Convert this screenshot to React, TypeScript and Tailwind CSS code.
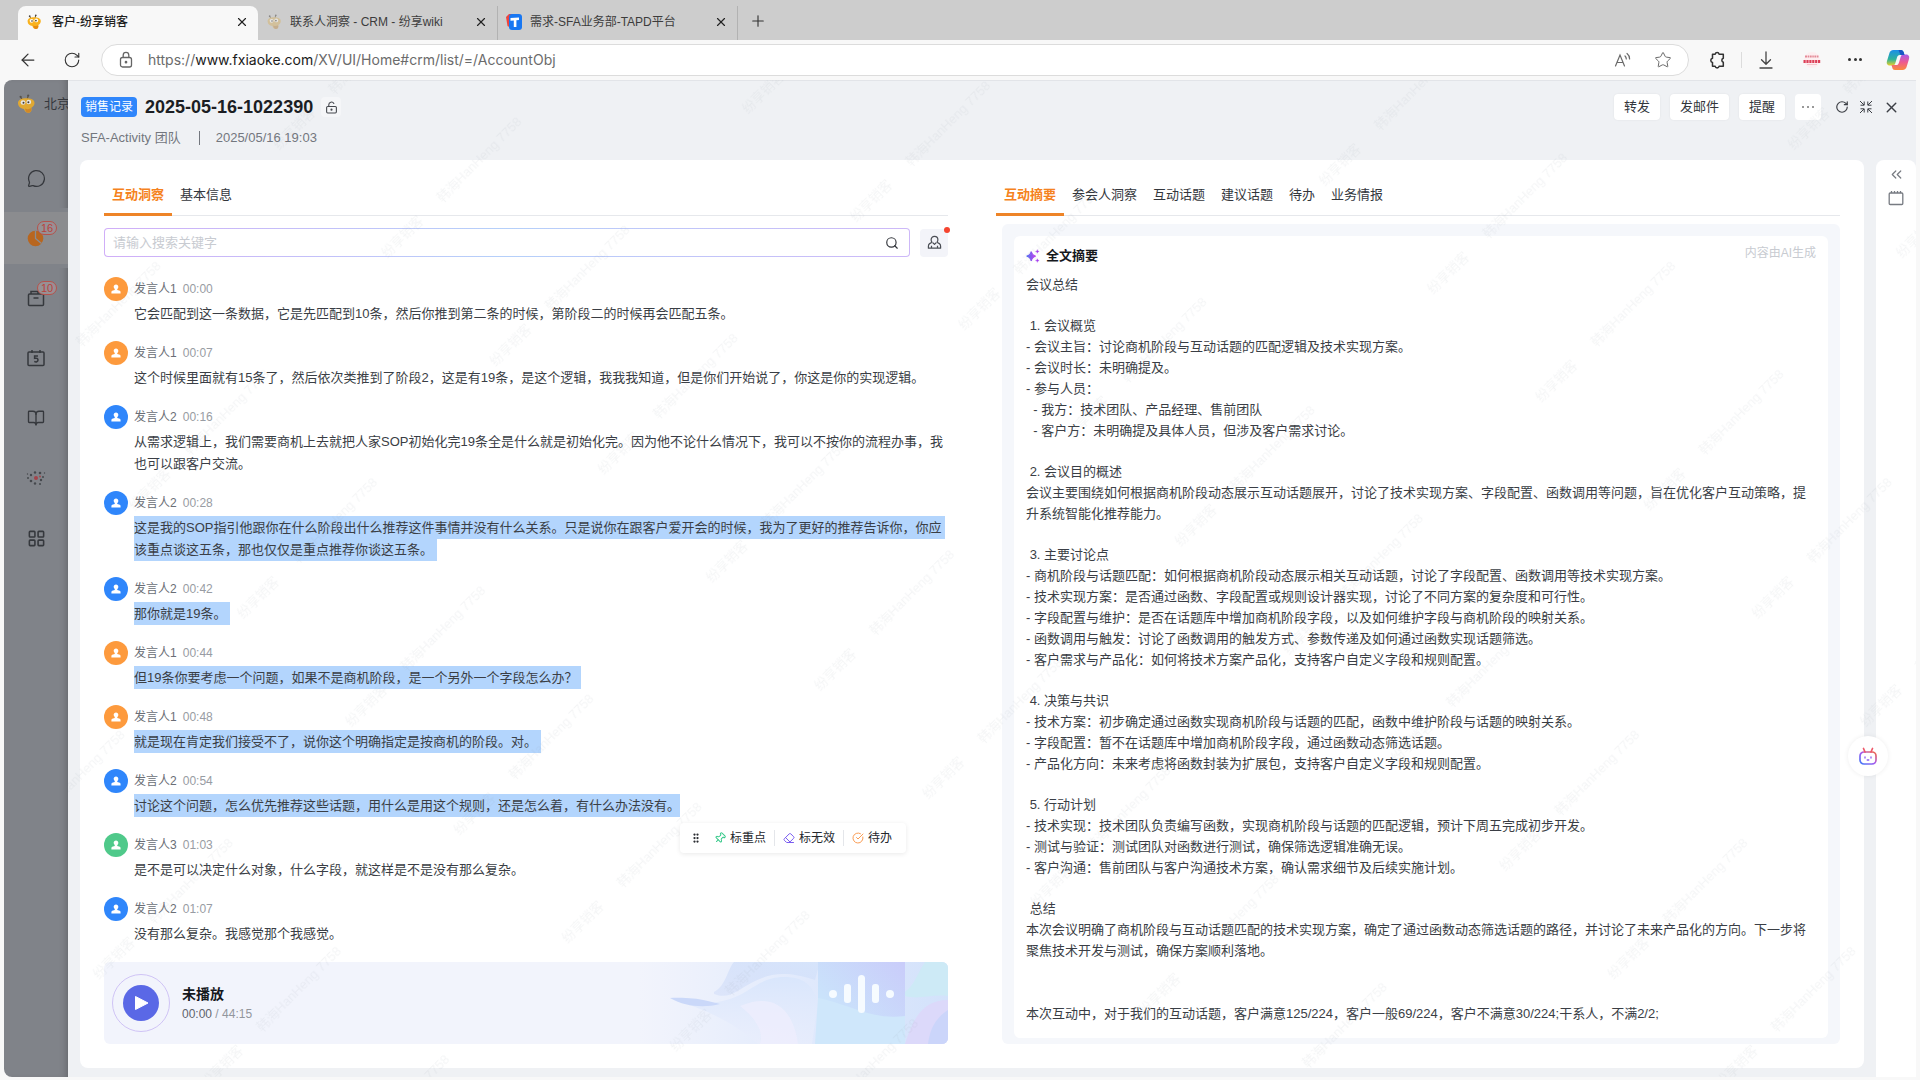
import React from "react";
import {
  ArrowLeft,
  BookOpen,
  ChevronsLeft,
  CircleCheckBig,
  Eraser,
  GripVertical,
  LayoutGrid,
  LockKeyholeOpen,
  MessageCircle,
  Pin,
  Plus,
  RotateCw,
  Search,
  Star,
  X,
} from "lucide-react";

type Speaker = 1 | 2 | 3;

interface Message {
  speaker: Speaker;
  time: string;
  text: string;
  selected?: boolean;
  menu?: boolean;
}

const messages: Message[] = [
  { speaker: 1, time: "00:00", text: "它会匹配到这一条数据，它是先匹配到10条，然后你推到第二条的时候，第阶段二的时候再会匹配五条。" },
  { speaker: 1, time: "00:07", text: "这个时候里面就有15条了，然后依次类推到了阶段2，这是有19条，是这个逻辑，我我我知道，但是你们开始说了，你这是你的实现逻辑。" },
  { speaker: 2, time: "00:16", text: "从需求逻辑上，我们需要商机上去就把人家SOP初始化完19条全是什么就是初始化完。因为他不论什么情况下，我可以不按你的流程办事，我也可以跟客户交流。" },
  { speaker: 2, time: "00:28", selected: true, text: "这是我的SOP指引他跟你在什么阶段出什么推荐这件事情并没有什么关系。只是说你在跟客户爱开会的时候，我为了更好的推荐告诉你，你应该重点谈这五条，那也仅仅是重点推荐你谈这五条。" },
  { speaker: 2, time: "00:42", selected: true, text: "那你就是19条。" },
  { speaker: 1, time: "00:44", selected: true, text: "但19条你要考虑一个问题，如果不是商机阶段，是一个另外一个字段怎么办？" },
  { speaker: 1, time: "00:48", selected: true, text: "就是现在肯定我们接受不了，说你这个明确指定是按商机的阶段。对。" },
  { speaker: 2, time: "00:54", selected: true, menu: true, text: "讨论这个问题，怎么优先推荐这些话题，用什么是用这个规则，还是怎么着，有什么办法没有。" },
  { speaker: 3, time: "01:03", text: "是不是可以决定什么对象，什么字段，就这样是不是没有那么复杂。" },
  { speaker: 2, time: "01:07", text: "没有那么复杂。我感觉那个我感觉。" },
];

const sections: string[][] = [
  ["会议总结"],
  [
    " 1. 会议概览",
    "- 会议主旨：讨论商机阶段与互动话题的匹配逻辑及技术实现方案。",
    "- 会议时长：未明确提及。",
    "- 参与人员：",
    "  - 我方：技术团队、产品经理、售前团队",
    "  - 客户方：未明确提及具体人员，但涉及客户需求讨论。",
  ],
  [
    " 2. 会议目的概述",
    "会议主要围绕如何根据商机阶段动态展示互动话题展开，讨论了技术实现方案、字段配置、函数调用等问题，旨在优化客户互动策略，提升系统智能化推荐能力。",
  ],
  [
    " 3. 主要讨论点",
    "- 商机阶段与话题匹配：如何根据商机阶段动态展示相关互动话题，讨论了字段配置、函数调用等技术实现方案。",
    "- 技术实现方案：是否通过函数、字段配置或规则设计器实现，讨论了不同方案的复杂度和可行性。",
    "- 字段配置与维护：是否在话题库中增加商机阶段字段，以及如何维护字段与商机阶段的映射关系。",
    "- 函数调用与触发：讨论了函数调用的触发方式、参数传递及如何通过函数实现话题筛选。",
    "- 客户需求与产品化：如何将技术方案产品化，支持客户自定义字段和规则配置。",
  ],
  [
    " 4. 决策与共识",
    "- 技术方案：初步确定通过函数实现商机阶段与话题的匹配，函数中维护阶段与话题的映射关系。",
    "- 字段配置：暂不在话题库中增加商机阶段字段，通过函数动态筛选话题。",
    "- 产品化方向：未来考虑将函数封装为扩展包，支持客户自定义字段和规则配置。",
  ],
  [
    " 5. 行动计划",
    "- 技术实现：技术团队负责编写函数，实现商机阶段与话题的匹配逻辑，预计下周五完成初步开发。",
    "- 测试与验证：测试团队对函数进行测试，确保筛选逻辑准确无误。",
    "- 客户沟通：售前团队与客户沟通技术方案，确认需求细节及后续实施计划。",
  ],
  [
    " 总结",
    "本次会议明确了商机阶段与互动话题匹配的技术实现方案，确定了通过函数动态筛选话题的路径，并讨论了未来产品化的方向。下一步将聚焦技术开发与测试，确保方案顺利落地。",
  ],
];

const avatarColors: Record<Speaker, string> = {
  1: "bg-[#fd9a3d]",
  2: "bg-[#2f86fb]",
  3: "bg-[#4fc98a]",
};

function BeeLogo({ className }: { className: string }) {
  return (
    <svg viewBox="0 0 20 20" className={className} aria-hidden="true">
      <path d="M5 3.5 6.2 6M12 2l-.6 3" stroke="#5b4a2a" strokeWidth="1.2" strokeLinecap="round" />
      <circle cx="4.6" cy="2.8" r="1.1" fill="#4b4640" />
      <circle cx="12.2" cy="1.6" r="1.1" fill="#4b4640" />
      <path d="M2 9c0-3 3.200-4.800 8-4.800S18.500 5.500 18.500 9c0 2.600-1.800 3.800-3.200 4.800.7 2.800-.3 5-2.900 5-2.400 0-3.800-1.600-4.400-3.800C4.500 14.500 2 12.500 2 9z" fill="#f9b21d" />
      <path d="M9 14.500c2 1 4.400.8 6.300-.4.500 2.700-.5 4.700-2.900 4.700-2 0-3.100-1.700-3.400-4.300z" fill="#e58a10" />
      <ellipse cx="7" cy="8.500" rx="2.400" ry="2.300" fill="#fff" />
      <ellipse cx="12.800" cy="8" rx="2.400" ry="2.300" fill="#fff" />
      <circle cx="7.500" cy="8.700" r="1" fill="#3b2c14" />
      <circle cx="12.400" cy="8.300" r="1" fill="#3b2c14" />
    </svg>
  );
}

function TapdLogo() {
  return (
    <svg viewBox="0 0 16 16" className="size-4" aria-hidden="true">
      <path d="M3 0h6v14H5L1.500 12 0 3z" fill="#f0433c" />
      <rect x="3" y="0" width="13" height="16" rx="3" fill="#1877f2" />
      <path d="M4.500 4 13 3.500v2.600l-2.600.2V13H7.800V6.500l-3.300.2z" fill="#fff" />
    </svg>
  );
}

function CopilotLogo() {
  return (
    <svg viewBox="0 0 24 24" className="size-6" aria-hidden="true">
      <defs>
        <linearGradient id="cpA" x1="0" y1="0" x2="0" y2="1">
          <stop offset="0" stopColor="#1b8fe8" />
          <stop offset=".6" stopColor="#2fb39a" />
          <stop offset="1" stopColor="#e8cf2a" />
        </linearGradient>
        <linearGradient id="cpB" x1="0" y1="0" x2="0" y2="1">
          <stop offset="0" stopColor="#a95be8" />
          <stop offset=".5" stopColor="#ee5a90" />
          <stop offset="1" stopColor="#fb8a3c" />
        </linearGradient>
      </defs>
      <path d="M7.500 2H15c1.500 0 2.300 1 2.700 2.300l.8 2.700H14c-1.800 0-2.500 1-3 2.600l-1.700 5.600c-.5 1.600-1.400 2.300-2.800 2.300H4c-2.500 0-3.800-1.700-3-4.500l2.200-7.300C3.900 3.200 5.200 2 7.500 2z" fill="url(#cpA)" />
      <path d="M16.500 22H9c-1.500 0-2.300-1-2.700-2.300L5.500 17H10c1.800 0 2.500-1 3-2.600l1.700-5.600c.5-1.600 1.400-2.300 2.800-2.300H20c2.500 0 3.800 1.700 3 4.500l-2.200 7.300c-.7 2.500-2 3.700-4.300 3.700z" fill="url(#cpB)" />
      <path d="M12.500 2H15c1.500 0 2.300 1 2.700 2.300l.8 2.700H14.500z" fill="#1a55c4" />
    </svg>
  );
}

function BrowserTab({ icon, title, active }: { icon: React.ReactNode; title: string; active?: boolean }) {
  return (
    <div
      className={
        active
          ? "flex h-[34px] w-60 items-center gap-2.5 rounded-t-lg bg-[#f8f8f8] px-2 pb-0.5 font-medium text-[#1f1f1f]"
          : "flex h-[34px] w-60 items-center gap-2 border-r border-[#b2b2b2] px-2 pb-0.5 text-[#3c3c3c]"
      }
    >
      {icon}
      <span className="flex-1 truncate text-xs">{title}</span>
      <button aria-label={"关闭 " + title} className="flex size-4 items-center justify-center text-[#222]">
        <X size={14} strokeWidth={2} />
      </button>
    </div>
  );
}

function Browser() {
  return (
    <header className="text-[#333]">
      <div className="flex h-10 items-end bg-[#cdcdcd] pl-[18px]">
        <BrowserTab active icon={<BeeLogo className="size-4" />} title="客户-纷享销客" />
        <BrowserTab icon={<BeeLogo className="size-4 opacity-50 grayscale-50" />} title="联系人洞察 - CRM - 纷享wiki" />
        <BrowserTab icon={<TapdLogo />} title="需求-SFA业务部-TAPD平台" />
        <button aria-label="新建标签页" className="flex h-[34px] w-10 items-center justify-center pb-1">
          <Plus size={18} strokeWidth={1.500} />
        </button>
      </div>
      <div className="flex h-10 items-center bg-[#f8f8f8] pr-2.5 pb-px pl-[18px]">
        <button aria-label="后退" className="mr-6 flex size-5 items-center justify-center">
          <ArrowLeft size={20} strokeWidth={1.500} />
        </button>
        <button aria-label="刷新页面" className="mr-[19px] flex size-5 items-center justify-center">
          <RotateCw size={18} strokeWidth={1.500} />
        </button>
        <div className="flex h-8 flex-1 items-center rounded-full border border-[#dcdcdc] bg-white pr-4 pl-4">
          <svg viewBox="0 0 16 18" className="h-[18px] w-4 shrink-0" fill="none" stroke="#666" strokeWidth="1.300" aria-hidden="true">
            <rect x="2.500" y="6.500" width="11" height="9.500" rx="2" />
            <path d="M5.200 6.500V4.200a2.800 2.800 0 0 1 5.600 0v2.300" />
            <circle cx="8" cy="11.200" r=".7" fill="#666" />
          </svg>
          <a href="#account" className="ml-3.5 flex-1 font-['Inter','Liberation_Sans',sans-serif] text-[14px] text-[#6b6b6b]">
            https://<span className="text-[#1a1a1a]">www.fxiaoke.com</span>/XV/UI/Home#crm/list/=/AccountObj
          </a>
          <button aria-label="朗读此页" className="mr-[22px] flex">
            <svg viewBox="0 0 18 16" className="h-4 w-[18px]" fill="none" stroke="#6a6a6a" strokeWidth="1.200" strokeLinecap="round" aria-hidden="true">
              <path d="M1.500 14 6 3l4.500 11M3 10.500h6M11 4c.9.8 1.300 1.800 1.300 3M13 1.500c1.700 1.300 2.600 3.200 2.600 5.500" />
            </svg>
          </button>
          <button aria-label="收藏" className="flex text-[#666]">
            <Star size={18} strokeWidth={1.300} />
          </button>
        </div>
        <button aria-label="扩展" className="ml-[18px] flex size-5 items-center justify-center">
          <svg viewBox="0 0 20 20" className="size-[18px]" fill="none" stroke="#333" strokeWidth="1.700" strokeLinejoin="round" aria-hidden="true">
            <path d="M5 3.500h3a2.200 2.200 0 0 1 4.300 0H17v4.600a2.300 2.300 0 0 0 0 4.400V17h-4.700a2.200 2.200 0 0 1-4.300 0H5v-4.300a2.400 2.400 0 0 1 0-4.700z" />
          </svg>
        </button>
        <span className="mx-3.5 h-4 w-px bg-[#dcdcdc]" />
        <button aria-label="下载" className="flex size-5 items-center justify-center">
          <svg viewBox="0 0 16 18" className="h-[18px] w-4" fill="none" stroke="#444" strokeWidth="1.300" strokeLinecap="round" strokeLinejoin="round" aria-hidden="true">
            <path d="M8 1v12M3.500 8.800 8 13.300l4.500-4.500M2 17h12" />
          </svg>
        </button>
        <button aria-label="个人资料" className="mx-[26px] flex size-5 items-center justify-center rounded-full">
          <svg viewBox="0 0 20 20" className="size-5" fill="none" aria-hidden="true">
            <circle cx="10" cy="10" r="8" fill="#fdeef0" />
            <path d="M3 6.500h14" stroke="#e38a97" strokeWidth="2" strokeDasharray="2 .6 1.500 .6" />
            <path d="M1.500 11.500h17" stroke="#dc3f57" strokeWidth="3.200" strokeDasharray="2.200 .7" />
            <path d="M5 14.500h10" stroke="#f3bcc4" strokeWidth=".8" />
          </svg>
        </button>
        <button aria-label="更多" className="mr-6 flex w-3.5 items-center justify-between">
          <span className="size-[3px] rounded-full bg-[#333]" />
          <span className="size-[3px] rounded-full bg-[#333]" />
          <span className="size-[3px] rounded-full bg-[#333]" />
        </button>
        <button aria-label="Copilot">
          <CopilotLogo />
        </button>
      </div>
    </header>
  );
}

function NavItem({ label, badge, active, children }: { label: string; badge?: string; active?: boolean; children: React.ReactNode }) {
  return (
    <button
      aria-label={label}
      className={
        active
          ? "flex h-[60px] w-full items-center justify-center border-y-4 border-[#808389] bg-[#8b8c8f]"
          : "flex h-[60px] w-full items-center justify-center"
      }
    >
      <span className="relative">
        {children}
        {badge && (
          <span className="absolute -top-2 left-2.5 flex h-3.5 items-center rounded-full border border-[#b5524b] bg-[#989094] px-[3px] text-[11px] leading-none text-[#b8423c]">
            {badge}
          </span>
        )}
      </span>
    </button>
  );
}

function Sidebar() {
  return (
    <nav aria-label="主导航" className="w-16 shrink-0 overflow-hidden rounded-tl-lg rounded-bl-lg bg-[#808389] text-[#35383d] shadow-[inset_-6px_0_8px_-6px_rgba(0,0,0,0.3)]">
      <div className="flex h-[68px] items-start gap-2 pt-3.5 pl-3">
        <BeeLogo className="size-5 shrink-0 opacity-80" />
        <span className="text-[13px] leading-5 whitespace-nowrap">北京</span>
      </div>
      <NavItem label="消息"><MessageCircle size={19} strokeWidth={1.600} /></NavItem>
      <NavItem label="CRM" active badge="16">
        <svg viewBox="0 0 18 18" className="size-[18px]" aria-hidden="true">
          <circle cx="8.500" cy="9.500" r="7.800" fill="#b8661f" />
          <path d="M8.500 1.500v8l6 5" stroke="#8b8c8f" strokeWidth="1.300" fill="none" />
        </svg>
      </NavItem>
      <NavItem label="工作" badge="10">
        <svg viewBox="0 0 18 18" className="size-[18px]" fill="none" stroke="currentColor" strokeWidth="1.500" aria-hidden="true">
          <rect x="1.500" y="5" width="15" height="11.500" rx="1" />
          <path d="M4 5V2.500h7V5M6.500 9h5" />
        </svg>
      </NavItem>
      <NavItem label="日程">
        <svg viewBox="0 0 18 18" className="size-[18px]" fill="none" stroke="currentColor" strokeWidth="1.500" aria-hidden="true">
          <rect x="1" y="3" width="16" height="13.500" rx="1" />
          <path d="M5 1v3M13 1v3M11 7H7.600v2.300c2.400-.5 3.400.3 3.400 1.800 0 1.700-2 2.300-3.700 1.300" />
        </svg>
      </NavItem>
      <NavItem label="知识库"><BookOpen size={18} strokeWidth={1.800} /></NavItem>
      <NavItem label="应用">
        <svg viewBox="0 0 20 16" className="h-4 w-5" fill="#45484d" aria-hidden="true">
          <circle cx="10" cy="8" r="2" fill="#a3434a" />
          <circle cx="5" cy="5" r="1.200" /><circle cx="9" cy="2.500" r="1.200" /><circle cx="14" cy="3" r="1.300" />
          <circle cx="17" cy="7" r="1" /><circle cx="15" cy="10" r="1.200" /><circle cx="14" cy="14" r="1" />
          <circle cx="9" cy="13.500" r="1.200" /><circle cx="5" cy="11" r="1.300" /><circle cx="2" cy="8" r="1" />
          <circle cx="14" cy="6.500" r=".9" fill="#a3434a" /><circle cx="1.500" cy="4" r=".7" /><circle cx="18.500" cy="3" r=".7" />
        </svg>
      </NavItem>
      <NavItem label="全部应用"><LayoutGrid size={19} strokeWidth={2} /></NavItem>
    </nav>
  );
}

function Tabs({ items, label }: { items: string[]; label: string }) {
  return (
    <div role="tablist" aria-label={label} className="flex border-b border-[#e6e8ec] text-[13px] leading-5">
      {items.map((item, i) => (
        <button
          key={item}
          role="tab"
          aria-selected={i === 0}
          className={
            i === 0
              ? "-mb-px border-b-3 border-[#ee8427] px-2 pt-[25px] pb-2 font-bold text-[#f58220]"
              : "px-2 pt-[25px] pb-2.5 text-[#33363c]"
          }
        >
          {item}
        </button>
      ))}
    </div>
  );
}

function SelectionMenu() {
  return (
    <div role="toolbar" aria-label="标注" className="absolute top-full left-full z-10 mt-1.5 flex h-[30px] items-center rounded bg-white pr-3.5 pl-2.5 text-xs whitespace-nowrap text-[#24272c] shadow-[0_1px_5px_rgba(0,0,0,0.09)]">
      <GripVertical size={12} strokeWidth={2.500} className="mr-3" />
      <button className="flex items-center gap-1 border-r border-[#e4e6ea] pr-2">
        <Pin size={12} className="rotate-45 text-[#38c98b]" />
        标重点
      </button>
      <button className="flex items-center gap-1 border-r border-[#e4e6ea] px-2">
        <Eraser size={12} className="text-[#7a5cf0]" />
        标无效
      </button>
      <button className="flex items-center gap-1 pl-2">
        <CircleCheckBig size={12} className="text-[#fb9d55]" />
        待办
      </button>
    </div>
  );
}

function selectionClass(message: Message) {
  if (!message.selected) return "";
  return message.menu ? "bg-[#b3d5fd] py-1" : "bg-[#b3d5fd] box-decoration-clone py-1 pr-1";
}

function MessageItem({ message }: { message: Message }) {
  return (
    <li>
      <div className="flex h-6 items-center gap-1.5 text-xs">
        <span className={"flex size-6 items-center justify-center rounded-full " + avatarColors[message.speaker]}>
          <svg viewBox="0 0 12 12" className="size-2.5" fill="#fff" aria-hidden="true">
            <path d="M6 .5c1.700 0 2.800 1.200 2.800 2.800 0 1.200-.5 2.200-1.300 2.800v1.200l3 .9c.9.300 1 1 1 3.300H.5c0-2.300.1-3 1-3.300l3-.9V6.100C3.700 5.500 3.200 4.500 3.200 3.300 3.200 1.700 4.300.5 6 .5z" />
          </svg>
        </span>
        <span className="text-[#6a6e76]">发言人{message.speaker}</span>
        <time className="text-[#989ca3]">{message.time}</time>
      </div>
      <p className="relative mt-0.5 ml-[30px] w-fit text-[13px] leading-[22px] text-[#3a3e45]">
        <span className={selectionClass(message)}>{message.text}</span>
        {message.menu && <SelectionMenu />}
      </p>
    </li>
  );
}

function PlayerArt() {
  return (
    <svg viewBox="0 0 310 82" preserveAspectRatio="xMaxYMid slice" className="absolute top-0 right-0 h-full w-[310px]" aria-hidden="true">
      <defs>
        <linearGradient id="bgFade" x1="0" x2="1">
          <stop offset="0" stopColor="#e4ecfc" stopOpacity="0" />
          <stop offset=".55" stopColor="#e0e9fc" />
          <stop offset="1" stopColor="#d3e2fb" />
        </linearGradient>
        <linearGradient id="fold" x1="0" x2="1" y1="1" y2="0">
          <stop offset="0" stopColor="#cfdbf8" stopOpacity=".5" />
          <stop offset="1" stopColor="#d6e4fb" />
        </linearGradient>
        <linearGradient id="tile" x1="0" x2="1" y1=".6" y2="0">
          <stop offset="0" stopColor="#cae3fb" />
          <stop offset="1" stopColor="#c9ccfa" />
        </linearGradient>
        <linearGradient id="sheet" x1="0" x2="0" y1="0" y2="1">
          <stop offset="0" stopColor="#d9e6fc" />
          <stop offset="1" stopColor="#eaeefc" stopOpacity=".6" />
        </linearGradient>
      </defs>
      <rect width="310" height="82" fill="url(#bgFade)" />
      <path d="M76 30C88 24 90 6 96 0h86l-5 18c-30-10-46-6-62 2S92 38 76 32z" fill="url(#fold)" />
      <path d="M32 36c20 8 40 7 60 1s30-22 54-22c20 0 28 8 34 24l-6 43H120C90 56 62 46 32 36z" fill="url(#sheet)" />
      <path d="M32 36c16 9 34 10 50 6-10-2-20-7-50-6z" fill="#cad8f9" />
      <path d="M102 44c28-12 52-4 58 38h-38c4-12-4-26-20-38z" fill="#efeefd" opacity=".7" />
      <path d="M180 36h87v46h-90z" fill="#cfe7fb" />
      <path d="M180 0h87v54c-34 4-50-10-87-18z" fill="url(#tile)" />
      <path d="M267 30c10-8 12-18 20-30h23v34c-18-2-28 4-43 0z" fill="#cdeaf6" />
      <path d="M267 82c8-26 18-44 43-44v44z" fill="#dcd9fa" />
      <path d="M290 82c2-16 8-26 20-34v34z" fill="#cbd5fa" />
      <g fill="#f6fbff">
        <circle cx="195" cy="32" r="4" />
        <rect x="206" y="22" width="7" height="19" rx="3" />
        <rect x="220" y="13" width="7" height="38" rx="3.500" />
        <rect x="234" y="22" width="7" height="19" rx="3" />
        <circle cx="252" cy="32" r="4" />
      </g>
    </svg>
  );
}

function Player() {
  return (
    <div className="relative mt-[17px] flex h-[82px] items-center overflow-hidden rounded-md bg-[#f2f4fc] pl-2">
      <PlayerArt />
      <button aria-label="播放" className="flex size-[58px] items-center justify-center rounded-full border border-[#cfc3f5]">
        <span className="flex size-9 items-center justify-center rounded-full bg-[#5a68e6]">
          <svg viewBox="0 0 16 16" className="size-4" aria-hidden="true">
            <path d="M2.500 1.500v13L15 8z" fill="#fff" stroke="#fff" strokeLinejoin="round" />
          </svg>
        </span>
      </button>
      <div className="ml-3 pt-0.5">
        <div className="text-sm leading-5 font-bold text-[#15181d]">未播放</div>
        <div className="text-xs leading-5 text-[#92969d]">
          <span className="text-[#5f636b]">00:00</span> / 44:15
        </div>
      </div>
    </div>
  );
}

function Conversation() {
  return (
    <section className="min-w-0 flex-1">
      <Tabs label="互动" items={["互动洞察", "基本信息"]} />
      <div className="mt-3 flex items-center gap-2.5">
        <div className="flex-1 rounded bg-linear-to-r from-[#d0aef8] via-[#b5d0fa] to-[#cdb8f8] p-px">
          <label className="flex h-[27px] items-center rounded-[3px] bg-white px-2">
            <input aria-label="搜索关键字" placeholder="请输入搜索关键字" className="min-w-0 flex-1 text-[13px] outline-none placeholder:text-[#c8cbd1]" />
            <Search size={14} className="mr-0.5 text-[#33363c]" />
          </label>
        </div>
        <button aria-label="标记发言人" className="relative flex size-7 items-center justify-center rounded bg-[#f3f4f9]">
          <svg viewBox="0 0 16 16" className="size-[15px]" fill="none" stroke="#4a4d54" strokeWidth="1.300" strokeLinejoin="round" aria-hidden="true">
            <path d="M8 1.500c2.200 0 3.600 1.600 3.600 3.600 0 1.200-.4 2-1 2.700l2.600 1.400c1 .6 1.300 1.300 1.300 2.800v2h-13v-2c0-1.500.3-2.200 1.300-2.800l2.600-1.400c-.6-.7-1-1.500-1-2.700 0-2 1.400-3.600 3.600-3.600zM4.800 14v-2.500M11.200 14v-2.500M6.200 8.300 8 10l1.800-1.700" />
          </svg>
          <span className="absolute -top-0.5 -right-0.5 size-1.5 rounded-full bg-[#f5442f]" />
        </button>
      </div>
      <ul className="mt-5 flex flex-col gap-4">
        {messages.map((m) => (
          <MessageItem key={m.time} message={m} />
        ))}
      </ul>
      <Player />
    </section>
  );
}

function Summary() {
  return (
    <section className="flex min-w-0 flex-1 flex-col">
      <Tabs label="分析" items={["互动摘要", "参会人洞察", "互动话题", "建议话题", "待办", "业务情报"]} />
      <div className="mt-2 ml-1.5 flex-1 rounded-md bg-[#f5f7fb] px-3 pt-3 pb-1.5">
        <article className="h-full rounded-md bg-white px-3 pt-[9px] pb-2 text-[13px] leading-[21px] text-[#3a3e45]">
          <div className="flex items-start justify-between pb-2">
            <h2 className="flex items-center gap-1.5 font-bold text-[#15181d]">
              <svg viewBox="0 0 16 16" className="size-3.5" aria-hidden="true">
                <defs>
                  <linearGradient id="spark" x1="0" x2="1">
                    <stop offset="0" stopColor="#4d6bf5" />
                    <stop offset="1" stopColor="#c43df0" />
                  </linearGradient>
                </defs>
                <path d="M6 3c.8 3.400 2 4.600 5 5.200C8 8.900 6.800 10.100 6 13.500 5.200 10.100 4 8.900.8 8.200 4 7.600 5.200 6.400 6 3z" fill="url(#spark)" stroke="url(#spark)" strokeWidth="1.400" />
                <path d="M13 .8c.2 1.200.7 1.700 2 2-1.300.3-1.800.8-2 2-.2-1.200-.7-1.700-2-2 1.300-.3 1.800-.8 2-2zM13 11.200c.2 1.200.7 1.700 2 2-1.300.3-1.800.8-2 2-.2-1.200-.7-1.700-2-2 1.300-.3 1.800-.8 2-2z" fill="#a63cf0" stroke="#a63cf0" strokeWidth=".5" />
              </svg>
              全文摘要
            </h2>
            <span className="text-xs text-[#c8cbd1]">内容由AI生成</span>
          </div>
          <div className="flex flex-col gap-5 whitespace-pre-wrap">
            {sections.map((lines) => (
              <div key={lines[0]}>
                {lines.map((line) => (
                  <p key={line}>{line}</p>
                ))}
              </div>
            ))}
          </div>
          <p className="mt-[42px]">本次互动中，对于我们的互动话题，客户满意125/224，客户一般69/224，客户不满意30/224;干系人，不满2/2;</p>
        </article>
      </div>
    </section>
  );
}

function RecordHeader() {
  const button = "flex h-[26px] items-center rounded bg-white px-2.5 text-[13px] text-[#33363c] shadow-[0_0_2px_rgba(0,0,0,0.08)]";
  return (
    <div className="flex h-20 items-start justify-between pt-3.5 pr-4 pl-[13px]">
      <div>
        <div className="flex h-[26px] items-center">
          <span className="flex h-5 items-center rounded-sm bg-[#2f86fb] px-1 text-xs text-white">销售记录</span>
          <h1 className="ml-2 text-lg font-bold text-[#1b1e23]">2025-05-16-1022390</h1>
          <button aria-label="锁定状态" className="ml-2 flex size-5 items-center justify-center rounded bg-[#f5f6f8] text-[#44474d]">
            <LockKeyholeOpen size={13} />
          </button>
        </div>
        <div className="mt-2 flex items-center text-[13px] leading-5 text-[#73777e]">
          <span>SFA-Activity 团队</span>
          <span className="mr-4 ml-[18px] h-3.5 w-px bg-[#73777e]" />
          <time>2025/05/16 19:03</time>
        </div>
      </div>
      <div className="flex h-[26px] items-center text-[#3b3e44]">
        <div className="mr-3.5 flex gap-2.5">
          <button className={button}>转发</button>
          <button className={button}>发邮件</button>
          <button className={button}>提醒</button>
          <button aria-label="更多操作" className="flex h-[26px] w-[26px] items-center justify-center gap-[3px] rounded bg-white">
            <span className="size-0.5 rounded-full bg-[#777]" />
            <span className="size-0.5 rounded-full bg-[#777]" />
            <span className="size-0.5 rounded-full bg-[#777]" />
          </button>
        </div>
        <div className="flex items-center gap-2.5">
          <button aria-label="刷新"><RotateCw size={14} /></button>
          <button aria-label="退出全屏">
            <svg viewBox="0 0 14 14" className="size-3.5" fill="none" stroke="currentColor" strokeWidth="1" aria-hidden="true">
              <path d="M1 1l4 4M1.500 5.200h3.700V1.500M13 1 9 5M12.500 5.200H8.800V1.500M1 13l4-4M1.500 8.800h3.700v3.700M13 13 9 9M12.500 8.800H8.800v3.700" />
            </svg>
          </button>
          <button aria-label="关闭"><X size={17} /></button>
        </div>
      </div>
    </div>
  );
}

function AssistantButton() {
  return (
    <button aria-label="AI 助手" className="absolute top-[656px] right-7 flex size-10 items-center justify-center rounded-full bg-white shadow-[0_0_5px_rgba(0,0,0,0.07)]">
      <svg viewBox="0 0 20 20" className="size-5" fill="none" strokeWidth="1.700" strokeLinecap="round" aria-hidden="true">
        <defs>
          <linearGradient id="bot" x1="0" x2="1" y1="1" y2="0">
            <stop offset="0" stopColor="#3f7bf7" />
            <stop offset=".5" stopColor="#a65bf0" />
            <stop offset="1" stopColor="#f5683f" />
          </linearGradient>
        </defs>
        <rect x="2" y="6" width="16" height="12" rx="4" stroke="url(#bot)" />
        <path d="M5.500 2.500 7 6M14.500 2.500 13 6" stroke="#ee5a6a" />
        <path d="M7 11v1M13 11v1M9.200 14h1.600" stroke="#8b5cf0" strokeWidth="1.300" />
      </svg>
    </button>
  );
}

function Watermark() {
  return (
    <svg className="pointer-events-none absolute inset-0 h-full w-full" aria-hidden="true">
      <defs>
        <pattern id="wm" width="357" height="153" patternUnits="userSpaceOnUse" patternTransform="translate(-68 -80) rotate(-45) translate(50 70)">
          <g fill="#8a8f99" fillOpacity=".09" fontSize="13" textAnchor="middle">
            <text x="67" y="80">纷享销客</text>
            <text x="176" y="80">韩海HanHeng 7758</text>
          </g>
        </pattern>
      </defs>
      <rect width="100%" height="100%" fill="url(#wm)" />
    </svg>
  );
}

export default function App() {
  return (
    <div className="flex min-h-screen flex-col bg-[#f8f8f8] font-['Liberation_Sans','Noto_Sans_CJK_SC',sans-serif]">
      <Browser />
      <div className="mx-1 mb-[3px] flex flex-1">
        <Sidebar />
        <main className="relative flex min-w-0 flex-1 flex-col bg-[#eff1f4] shadow-[inset_0_1px_0_#e2e4e8]">
          <RecordHeader />
          <div className="flex flex-1 gap-3 pl-3">
            <div className="mb-[9px] flex min-w-0 flex-1 gap-12 rounded-lg bg-white px-6 pb-6">
              <Conversation />
              <Summary />
            </div>
            <aside className="flex w-10 flex-col items-center gap-1.5 rounded-t-lg bg-white pt-1 text-[#777b82]">
              <button aria-label="展开侧栏" className="flex h-5 items-center"><ChevronsLeft size={17} strokeWidth={1.700} /></button>
              <button aria-label="日历" className="flex">
                <svg viewBox="0 0 16 16" className="size-4" fill="none" stroke="currentColor" strokeWidth="1.300" aria-hidden="true">
                  <rect x="1.200" y="3" width="13.600" height="11.500" rx="1" />
                  <path d="M3.500 1v2M6.500 1v2M9.500 1v2M12.500 1v2" />
                </svg>
              </button>
            </aside>
          </div>
          <AssistantButton />
          <Watermark />
        </main>
      </div>
    </div>
  );
}
